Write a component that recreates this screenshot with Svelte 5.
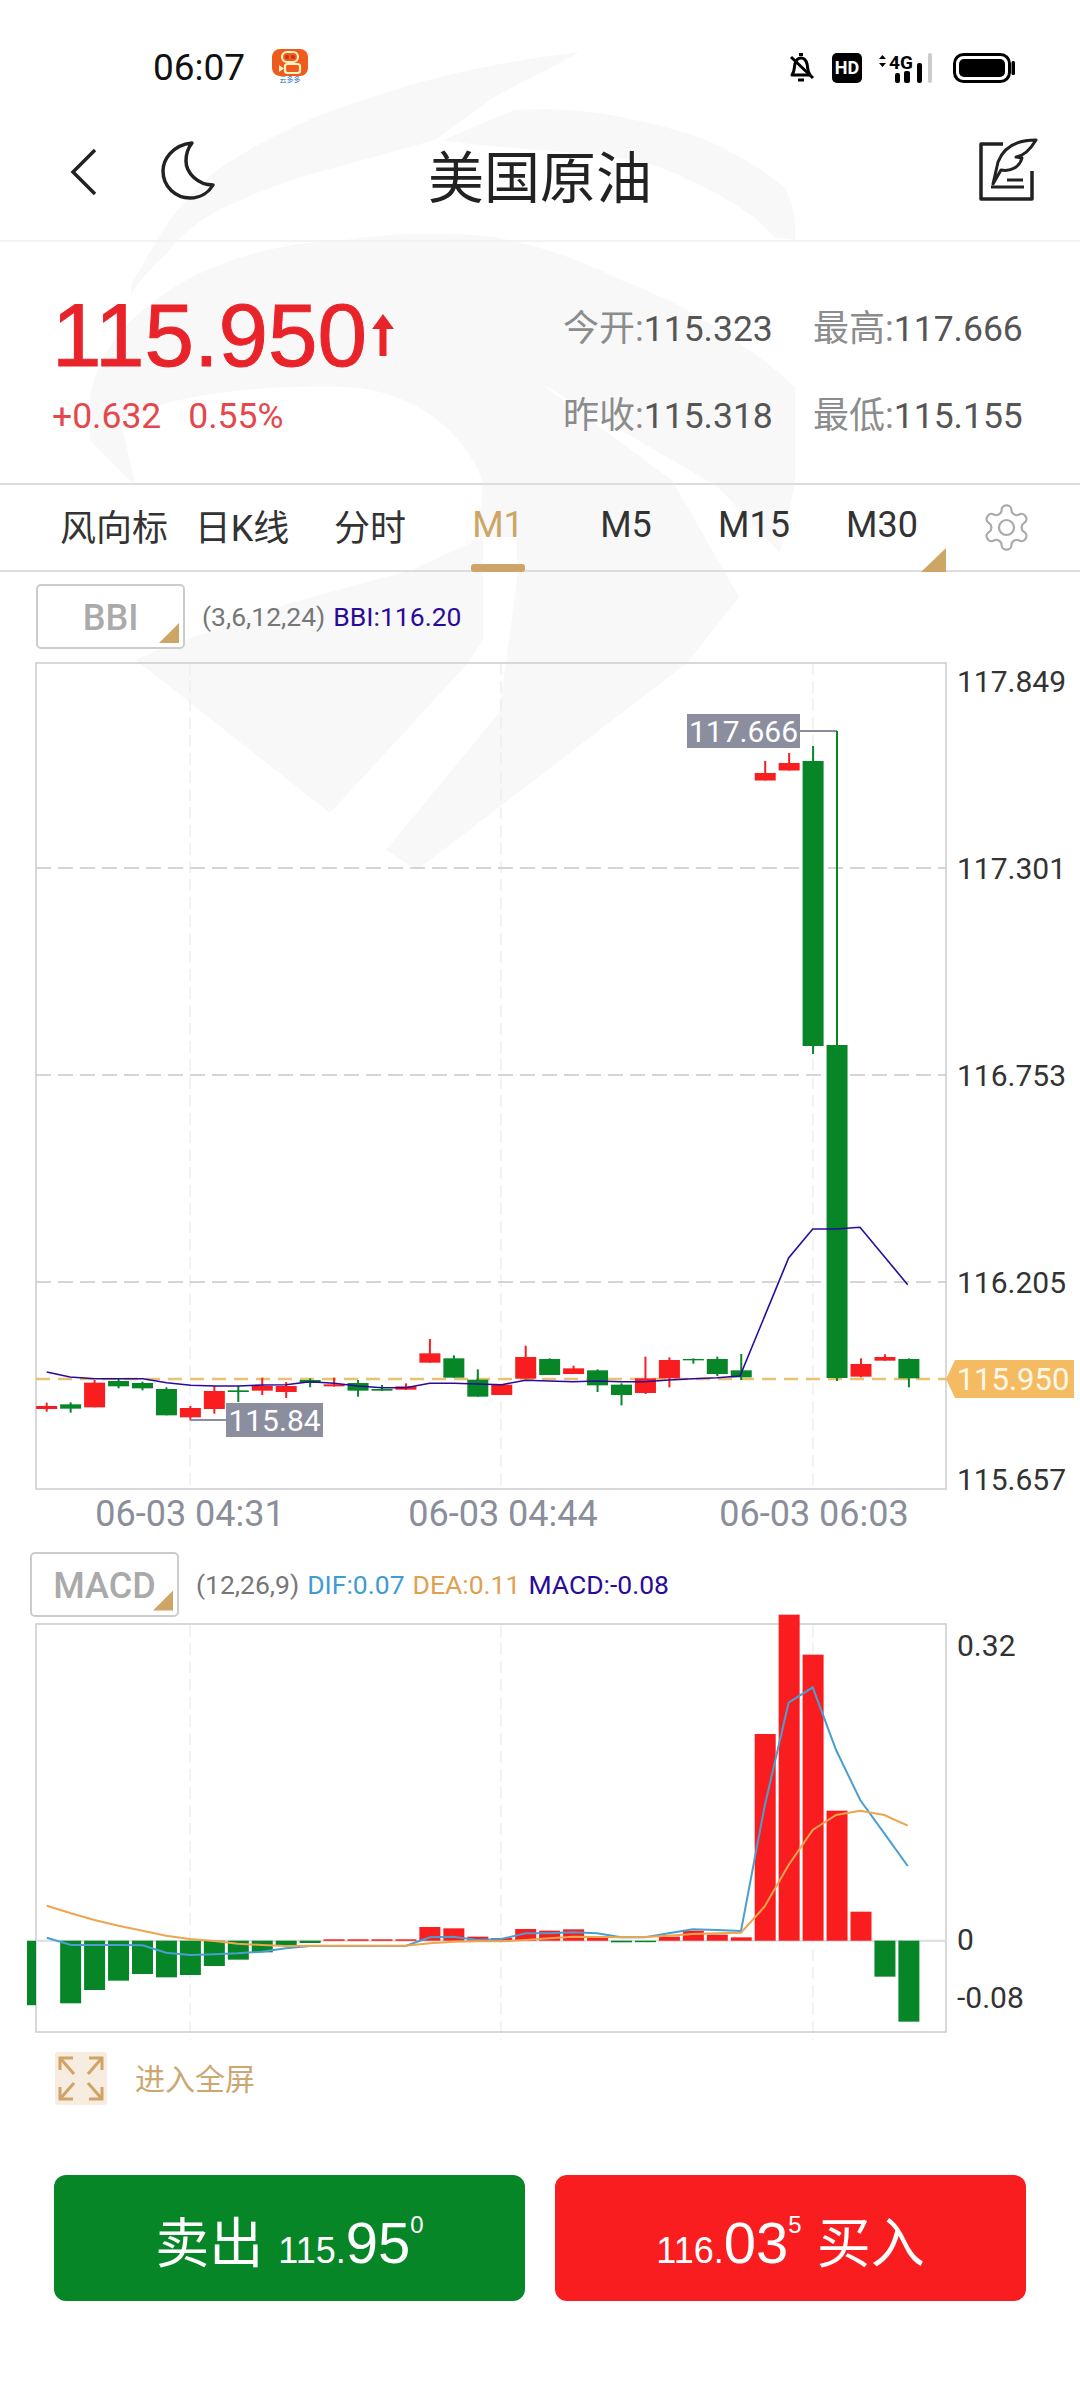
<script>
	const tabs = ['风向标', '日K线', '分时', 'M1', 'M5', 'M15', 'M30'];
	const stats = [
		['今开', '115.323'],
		['最高', '117.666'],
		['昨收', '115.318'],
		['最低', '115.155']
	];

	const UP = '#f91d1f';
	const DOWN = '#078628';
	const cx = (i) => 46.7 + 23.95 * i;
	const vy = (v) => 1300 + v / 3;

	// [type, wickTop, bodyTop, bodyBottom, wickBottom], read off a 3x crop starting at y=1300
	const low = [
		['u', 308, 318, 327, 335], ['d', 307, 313, 326, 338], ['u', 240, 248, 322, 322], ['d', 236, 243, 259, 265],
		['d', 245, 249, 265, 271], ['d', 262, 267, 346, 346], ['u', 318, 324, 352, 361], ['u', 258, 273, 327, 341],
		['d', 258, 271, 276, 306], ['u', 233, 258, 272, 285], ['u', 246, 258, 276, 294], ['d', 235, 240, 249, 262],
		['u', 233, 253, 259, 260], ['d', 240, 249, 272, 290], ['d', 255, 267, 272, 273], ['u', 250, 259, 269, 270],
		['u', 117, 160, 188, 188], ['d', 166, 175, 233, 233], ['d', 208, 239, 290, 290], ['u', 254, 254, 285, 285],
		['u', 137, 171, 236, 236], ['d', 175, 177, 225, 225], ['u', 197, 205, 222, 222], ['d', 208, 211, 256, 276],
		['d', 250, 254, 285, 316], ['u', 170, 235, 279, 282], ['u', 172, 180, 235, 262], ['d', 175, 177, 181, 191],
		['d', 170, 177, 222, 228], ['d', 162, 211, 232, 240]
	];
	const candles = [
		...low.map(([t, a, b, c, d], i) => ({ i, t, wt: vy(a), bt: vy(b), bb: vy(c), wb: vy(d) })),
		{ i: 30, t: 'u', wt: 761, bt: 773, bb: 780.5, wb: 780.5 },
		{ i: 31, t: 'u', wt: 753, bt: 763, bb: 770.5, wb: 770.5 },
		{ i: 32, t: 'd', wt: 746, bt: 761, bb: 1046, wb: 1054 },
		{ i: 33, t: 'd', wt: 1045, bt: 1045, bb: 1378, wb: 1381 },
		{ i: 34, t: 'u', wt: vy(175), bt: vy(192), bb: vy(230), wb: vy(232) },
		{ i: 35, t: 'u', wt: vy(163), bt: vy(171), bb: vy(182), wb: vy(182) },
		{ i: 36, t: 'd', wt: vy(175), bt: vy(177), bb: vy(235), wb: vy(262) }
	];

	const bbi = [
		[46.7, 1372], [70, 1377], [94.7, 1378.7], [143, 1378.7], [166.7, 1382.7], [190.7, 1385.3], [214.7, 1386], [238.3, 1386],
		[262.3, 1385], [286, 1384.7], [310, 1381.7], [334, 1383.3], [358, 1386], [382, 1387.7], [405.7, 1387.7], [429.7, 1383.3],
		[453.7, 1383.3], [477.7, 1384], [501.7, 1384.7], [525.5, 1380.3], [549, 1381], [573, 1381.7], [597, 1381], [621, 1381.7],
		[645, 1381.7], [669, 1380], [693, 1378.7], [717, 1377.7], [740, 1376], [788.6, 1258], [812.7, 1229], [836, 1229],
		[860, 1227.3], [907.7, 1284.7]
	];

	const ZERO = 1940.7;
	const my = (v) => 1540 + v / 3;
	// histogram ends per candle index, null where the bar is missing
	const hist = [
		null, 1390, 1350, 1322, 1302, 1312, 1305, 1278, 1259, 1237, 1217, 1209, 1198, 1198, 1198, 1198,
		1161, 1165, 1190, 1194, 1167, 1172, 1168, 1190, 1207, 1204, 1190, 1172, 1184, 1192, 582, 224, 344, 812, 1115, 1310, 1445
	];
	const bars = hist
		.map((v, i) => ({ v, i }))
		.filter((b) => b.v !== null)
		.map(({ v, i }) => {
			const e = my(v);
			return { i, up: e < ZERO, y: Math.min(e, ZERO), h: Math.max(Math.abs(e - ZERO), 1.5) };
		});
	const zx = [68, 103, 137, 172, 207, 241, 276, 311, 345, 380, 415, 450, 485, 520, 554, 589, 624, 658, 693, 728, 763, 798, 832, 867, 902, 937, 971, 1006, 1041, 1076, 1110, 1145, 1180, 1214, 1249, 1284, 1318];
	const difv = [1193, 1215, 1215, 1215, 1216, 1238, 1245, 1243, 1240, 1235, 1225, 1218, 1218, 1218, 1218, 1218, 1192, 1190, 1200, 1197, 1180, 1180, 1177, 1180, 1192, 1192, 1180, 1168, 1170, 1173, 800, 488, 442, 630, 780, 880, 978];
	const deav = [1097, 1120, 1140, 1157, 1172, 1187, 1197, 1203, 1211, 1215, 1218, 1217, 1217, 1217, 1217, 1217, 1210, 1205, 1204, 1204, 1200, 1195, 1190, 1191, 1192, 1191, 1187, 1182, 1180, 1178, 1100, 975, 870, 825, 812, 825, 857];
	const line = (vals) => vals.map((v, i) => `${(zx[i] / 1.452).toFixed(1)},${my(v).toFixed(1)}`).join(' ');
	const bbiPts = bbi.map((p) => p.join(',')).join(' ');
</script>

<div class="page">
	<svg class="watermark" viewBox="0 0 1080 900" width="1080" height="900">
		<path d="M580 52 C500 62 460 72 417 83 C380 95 350 103 315 117 C275 135 240 153 213 173 C185 200 170 218 157 240 L131 285 L131 295 C145 272 155 265 167 253 C180 235 195 225 213 213 C250 195 280 183 315 173 L435 140 L494 97Z" />
		<path d="M514 110 C550 108 590 110 621 117 C660 125 690 133 713 143 C745 158 765 172 784 187 C795 205 796 222 795 240 L774 237 C760 220 745 210 723 197 C700 185 675 172 647 163 C590 150 500 150 443 140Z" />
		<path d="M90 400 C100 320 200 245 346 240 C395 232 450 232 494 237 C540 245 585 262 621 280 C660 295 695 312 723 333 C750 350 775 368 795 387 L795 483 L780 553 L718 487 L540 383 L672 480 L739 597 L687 663 L417 870 L386 850 L499 713 L517 580 L517 537 L478 537 L483 483 C470 440 420 390 346 387 C280 385 213 390 160 405 L121 423 L136 487 L90 440Z" />
		<path d="M136 660 C180 640 240 622 290 603 L412 570 L483 537 V640 L468 663 L330 813Z" />
	</svg>

	<div class="content">
		<header class="status">
			<span class="time">06:07</span>
			<svg class="app-icon" viewBox="0 0 36 34" width="36" height="34">
				<rect x="0" y="0" width="36" height="27" rx="8" fill="#ee5b1c" />
				<rect x="10" y="3" width="16" height="10" rx="5" fill="none" stroke="#fff3c4" stroke-width="2.2" />
				<circle cx="15" cy="8" r="2" fill="#c8321c" />
				<circle cx="21" cy="8" r="2" fill="#c8321c" />
				<rect x="13" y="15" width="15" height="9" rx="2.5" fill="none" stroke="#fff3c4" stroke-width="2.2" />
				<path d="M7 16 L12 19.5 L7 23Z" fill="#fff3c4" />
				<text x="18" y="33" text-anchor="middle" class="app-name">云多多</text>
			</svg>
			<div class="status-right">
				<svg viewBox="0 0 26 30" width="26" height="30">
					<path d="M4 22 C7 18 6 14 7 11 C8 7 10 5 13 5 C16 5 18 7 19 11 C20 14 19 18 22 22Z" fill="none" stroke="#000" stroke-width="3" stroke-linejoin="round" />
					<path d="M3 4 L25 25" stroke="#000" stroke-width="3" />
					<path d="M11 1.5 H15 M10 27 H16" stroke="#000" stroke-width="3" />
				</svg>
				<span class="hd">HD</span>
				<svg viewBox="0 0 56 30" width="56" height="30">
					<path d="M1 6 L4.5 2 L8 6Z M1 10 L4.5 14 L8 10Z" fill="#000" />
					<text x="11" y="16" class="net">4G</text>
					<rect x="17" y="20" width="5" height="10" rx="2" fill="#000" />
					<rect x="26" y="18" width="6" height="12" rx="2" fill="#000" />
					<rect x="39" y="10" width="5" height="20" rx="2" fill="#000" />
					<rect x="50" y="0" width="4" height="30" rx="2" fill="#ccc" />
				</svg>
				<svg class="battery" viewBox="0 0 62 30" width="62" height="30">
					<rect x="1.5" y="1.5" width="55" height="27" rx="9" fill="none" stroke="#000" stroke-width="3" />
					<rect x="6" y="6" width="46" height="18" rx="5" fill="#000" />
					<rect x="58.5" y="8" width="3.5" height="14" rx="1.5" fill="#000" />
				</svg>
			</div>
		</header>

		<nav class="nav">
			<svg class="nav-left" viewBox="60 140 170 70" width="170" height="70">
				<path d="M95 155 L73 177 L95 199" fill="none" stroke="#222" stroke-width="3.5" />
				<path d="M192 148 C172 150 163 165 163 176 C163 192 176 203 190 203 C201 203 209 197 213 190 C198 190 186 178 186 166 C186 159 188 153 192 148Z" fill="none" stroke="#222" stroke-width="3.5" stroke-linejoin="round" />
			</svg>
			<h1>美国原油</h1>
			<svg class="nav-right" viewBox="976 140 64 72" width="64" height="72">
				<path d="M1003 150 H981 V205 H1032 V177" fill="none" stroke="#222" stroke-width="3.5" stroke-linejoin="round" />
				<path d="M1036 146 C1018 146 1004 152 998 168 L993 190 L1001 176 C1012 178 1020 172 1022 164 L1016 163 C1024 162 1030 156 1036 146Z" fill="none" stroke="#222" stroke-width="3" stroke-linejoin="round" />
				<path d="M1007 186 H1023 M991 193 H1024" stroke="#222" stroke-width="3" />
			</svg>
		</nav>

		<section class="quote">
			<div class="quote-main">
				<div class="price">
					<span>115.950</span>
					<svg viewBox="0 0 22 42" width="22" height="42">
						<path d="M11 0 L22 15 H14.5 V42 H7.5 V15 H0Z" fill="#e8242a" />
					</svg>
				</div>
				<div class="change"><span>+0.632</span><span>0.55%</span></div>
			</div>
			<div class="stats">
				{#each stats as [label, value]}
					<div class="stat"><span class="stat-label">{label}:</span>{value}</div>
				{/each}
			</div>
		</section>

		<div class="tabs">
			{#each tabs as t, i}
				<div class="tab label" class:active={t === 'M1'} class:more={i === tabs.length - 1}>{t}</div>
			{/each}
			<div class="tab gear">
				<svg viewBox="0 0 24 24" width="53" height="53" fill="none" stroke="#aaa" stroke-width="1" stroke-linejoin="round">
					<path d="M12.22 2h-.44a2 2 0 0 0-2 2v.18a2 2 0 0 1-1 1.73l-.43.25a2 2 0 0 1-2 0l-.15-.08a2 2 0 0 0-2.73.73l-.22.38a2 2 0 0 0 .73 2.73l.15.1a2 2 0 0 1 1 1.72v.51a2 2 0 0 1-1 1.74l-.15.09a2 2 0 0 0-.73 2.73l.22.38a2 2 0 0 0 2.73.73l.15-.08a2 2 0 0 1 2 0l.43.25a2 2 0 0 1 1 1.73V20a2 2 0 0 0 2 2h.44a2 2 0 0 0 2-2v-.18a2 2 0 0 1 1-1.73l.43-.25a2 2 0 0 1 2 0l.15.08a2 2 0 0 0 2.73-.73l.22-.39a2 2 0 0 0-.73-2.73l-.15-.08a2 2 0 0 1-1-1.74v-.5a2 2 0 0 1 1-1.74l.15-.09a2 2 0 0 0 .73-2.73l-.22-.38a2 2 0 0 0-2.73-.73l-.15.08a2 2 0 0 1-2 0l-.43-.25a2 2 0 0 1-1-1.73V4a2 2 0 0 0-2-2z" />
					<circle cx="12" cy="12" r="3.4" />
				</svg>
			</div>
		</div>

		<div class="ind-row first">
			<div class="ind-box">BBI</div>
			<span class="params">(3,6,12,24)</span>
			<span class="purple">BBI:116.20</span>
		</div>

		<svg class="chart" viewBox="0 662 1080 888" width="1080" height="888">
			{#each [190, 501, 813] as x}
				<line x1={x} x2={x} y1="663" y2="1488" class="vgrid" />
			{/each}
			{#each [868, 1075, 1282] as y}
				<line x1="36" x2="946" y1={y} y2={y} class="hgrid" />
			{/each}
			<rect x="36" y="663" width="910" height="826" class="frame" />
			<line x1="36" x2="946" y1="1379" y2="1379" class="last-line" />

			{#each candles as c}
				<g fill={c.t === 'u' ? UP : DOWN}>
					<rect x={cx(c.i) - 1} y={c.wt} width="2" height={c.wb - c.wt} />
					<rect x={cx(c.i) - 10.5} y={c.bt} width="21" height={c.bb - c.bt} />
				</g>
			{/each}

			<polyline points={bbiPts} class="bbi" />

			<path d="M800 731 H837" class="conn" />
			<path d="M837 731 V1045" class="conn-green" />
			<rect x="687" y="714" width="113" height="34" fill="#8a8e9e" />
			<text x="743.5" y="742" text-anchor="middle" class="tag">117.666</text>

			<path d="M190 1420 H226" class="conn" />
			<rect x="226" y="1403" width="97" height="34" fill="#8a8e9e" />
			<text x="274.5" y="1431" text-anchor="middle" class="tag">115.84</text>

			<path d="M946 1379 L955 1360 H1074 V1398 H955Z" fill="#f5bb63" />
			<text x="1013" y="1390" text-anchor="middle" class="tag big">115.950</text>

			{#each [['117.849', 681], ['117.301', 868], ['116.753', 1075], ['116.205', 1282], ['115.657', 1479]] as [t, y]}
				<text x="957" y={y + 11} class="axis">{t}</text>
			{/each}
			{#each [['06-03 04:31', 190], ['06-03 04:44', 503], ['06-03 06:03', 814]] as [t, x]}
				<text x={x} y="1526" text-anchor="middle" class="date">{t}</text>
			{/each}
		</svg>

		<div class="ind-row second">
			<div class="ind-box">MACD</div>
			<span class="params">(12,26,9)</span>
			<span class="blue">DIF:0.07</span>
			<span class="orange">DEA:0.11</span>
			<span class="purple">MACD:-0.08</span>
		</div>

		<svg class="chart" viewBox="0 1624 1080 416" width="1080" height="416">
			{#each [190, 501, 813] as x}
				<line x1={x} x2={x} y1="1625" y2="2040" class="vgrid" />
			{/each}
			<rect x="36" y="1624" width="910" height="408" class="frame" />
			<line x1="36" x2="946" y1={ZERO} y2={ZERO} class="zero" />
			<rect x="27" y={ZERO} width="9" height="64.5" fill={DOWN} />
			{#each bars as b}
				<rect x={cx(b.i) - 10.5} y={b.y} width="21" height={b.h} fill={b.up ? UP : DOWN} />
			{/each}
			<polyline points={line(difv)} class="dif" />
			<polyline points={line(deav)} class="dea" />
			<text x="957" y="1656" class="axis">0.32</text>
			<text x="957" y="1950" class="axis">0</text>
			<text x="957" y="2008" class="axis">-0.08</text>
		</svg>

		<div class="fullscreen">
			<svg viewBox="0 0 52 53" width="52" height="53">
				<rect width="52" height="53" rx="3" fill="#f7ece0" />
				<path d="M5 18 V6 H18 M5 6 L19 22 M47 18 V6 H34 M47 6 L33 22 M5 35 V47 H18 M5 47 L19 31 M47 35 V47 H34 M47 47 L33 31" fill="none" stroke="#d0a468" stroke-width="3" />
			</svg>
			<span>进入全屏</span>
		</div>

		<div class="trade">
			<button class="sell">
				<span class="cn">卖出</span>
				<span class="px"><small>115.</small>95<sup>0</sup></span>
			</button>
			<button class="buy">
				<span class="px"><small>116.</small>03<sup>5</sup></span>
				<span class="cn">买入</span>
			</button>
		</div>
	</div>
</div>

<style>
	:global(body) {
		margin: 0;
		background: #fff;
	}
	.page {
		position: relative;
		width: 1080px;
		height: 2400px;
		overflow: hidden;
		background: #fff;
		font-family: Roboto, "Noto Sans CJK SC", sans-serif;
	}
	.watermark {
		position: absolute;
		left: 0;
		top: 0;
		fill: #f8f8f8;
	}
	.content {
		position: relative;
	}
	svg {
		display: block;
	}

	.status {
		display: flex;
		align-items: center;
		height: 100px;
		padding: 34px 65px 0 153px;
		box-sizing: border-box;
	}
	.time {
		font-size: 37px;
		color: #111;
	}
	.app-icon {
		margin-left: 27px;
		margin-top: -2px;
		overflow: visible;
	}
	.app-name {
		font-size: 7px;
		fill: #2a6fb5;
		font-family: "Noto Sans CJK SC", sans-serif;
	}
	.status-right {
		display: flex;
		align-items: center;
		margin-left: auto;
		margin-top: 2px;
	}
	.status-right svg {
		overflow: visible;
	}
	.hd {
		width: 30px;
		height: 30px;
		margin-left: 18px;
		border-radius: 5px;
		background: #000;
		color: #fff;
		font-size: 18px;
		font-weight: 700;
		line-height: 30px;
		text-align: center;
	}
	.status-right .hd + svg {
		margin-left: 16px;
	}
	.net {
		font-size: 19px;
		font-weight: 700;
		fill: #000;
	}
	.battery {
		margin-left: 19px;
	}

	.nav {
		display: grid;
		grid-template-columns: 1fr auto 1fr;
		align-items: center;
		height: 142px;
		box-sizing: border-box;
		border-bottom: 2px solid #f3f3f3;
		padding: 0 40px;
	}
	.nav-left {
		margin-left: 20px;
	}
	.nav-right {
		justify-self: end;
	}
	.nav h1 {
		margin: 0;
		padding-top: 6px;
		font-size: 56px;
		font-weight: 400;
		color: #222;
		font-family: "Noto Sans CJK SC", sans-serif;
	}

	.quote {
		display: flex;
		justify-content: space-between;
		height: 243px;
		box-sizing: border-box;
		border-bottom: 2px solid #ddd;
	}
	.quote-main {
		padding: 51px 0 0 52px;
	}
	.price {
		display: flex;
		align-items: center;
		gap: 5px;
		font-family: "Liberation Sans", sans-serif;
		font-size: 89px;
		line-height: 84px;
		color: #e8242a;
		-webkit-text-stroke: 1px #e8242a;
	}
	.change {
		display: flex;
		gap: 27px;
		margin-top: 19px;
		font-size: 35.5px;
		line-height: 40px;
		color: #e5484c;
	}
	.stats {
		display: grid;
		grid-template-columns: 250px 267px;
		grid-auto-rows: 40px;
		row-gap: 47px;
		padding-top: 67px;
		font-size: 35.5px;
		line-height: 40px;
		color: #555;
	}
	.stat-label {
		color: #8c8c8c;
		font-size: 36px;
	}

	.tabs {
		display: grid;
		grid-template-columns: repeat(7, 128px) 120px;
		height: 87px;
		box-sizing: border-box;
		padding-left: 50px;
		border-bottom: 2px solid #ddd;
	}
	.tab {
		position: relative;
		display: flex;
		align-items: center;
		justify-content: center;
		font-size: 36px;
		color: #333;
	}
	.tab.label {
		padding-bottom: 5px;
	}
	.tab.active {
		color: #cda565;
	}
	.tab.active::after {
		content: "";
		position: absolute;
		left: 37px;
		right: 37px;
		bottom: -2px;
		height: 8px;
		border-radius: 3px;
		background: #d0a468;
	}
	.tab.more::after {
		content: "";
		position: absolute;
		right: 0;
		bottom: -2px;
		width: 25px;
		height: 24px;
		background: #cda565;
		clip-path: polygon(100% 0, 100% 100%, 0 100%);
	}

	.ind-row {
		display: flex;
		align-items: center;
		gap: 8px;
		box-sizing: border-box;
		font-size: 26.5px;
	}
	.ind-row.first {
		height: 90px;
		padding: 0 0 1px 36px;
	}
	.ind-row.second {
		height: 74px;
		padding: 2px 0 8px 30px;
	}
	.ind-box {
		position: relative;
		box-sizing: border-box;
		width: 149px;
		height: 65px;
		margin-right: 9px;
		border: 2px solid #ccc;
		border-radius: 5px;
		background: rgba(255, 255, 255, 0.6);
		color: #aaa;
		font-size: 36px;
		font-weight: 500;
		line-height: 65px;
		text-align: center;
	}
	.ind-box::after {
		content: "";
		position: absolute;
		right: 4px;
		bottom: 4px;
		width: 20px;
		height: 20px;
		background: #cda565;
		clip-path: polygon(100% 0, 100% 100%, 0 100%);
	}
	.params {
		color: #777;
	}
	.purple {
		color: #2a0a9a;
	}
	.blue {
		color: #3f9bd0;
	}
	.orange {
		color: #e0a050;
	}

	.chart {
		overflow: visible;
	}
	.vgrid {
		stroke: #eee;
		stroke-width: 1.5;
		stroke-dasharray: 12 6;
	}
	.hgrid {
		stroke: #c8c8c8;
		stroke-width: 1.5;
		stroke-dasharray: 15 7;
		fill: none;
	}
	.frame {
		fill: none;
		stroke: #ccc;
		stroke-width: 1.5;
	}
	.zero {
		stroke: #ddd;
		stroke-width: 2;
	}
	.last-line {
		stroke: #e8c36f;
		stroke-width: 2.5;
		stroke-dasharray: 14 8;
	}
	.bbi {
		fill: none;
		stroke: #2a0a9a;
		stroke-width: 1.6;
	}
	.conn {
		fill: none;
		stroke: #8a8e9e;
		stroke-width: 2;
	}
	.conn-green {
		fill: none;
		stroke: #078628;
		stroke-width: 2;
	}
	.tag {
		font-size: 30px;
		fill: #fff;
	}
	.tag.big {
		font-size: 31px;
		fill: #fff8e6;
	}
	.axis {
		font-size: 30px;
		fill: #333;
	}
	.date {
		font-size: 36px;
		fill: #8a8e9a;
	}
	.dif {
		fill: none;
		stroke: #4a9fd0;
		stroke-width: 2;
	}
	.dea {
		fill: none;
		stroke: #eda54e;
		stroke-width: 2;
	}

	.fullscreen {
		display: flex;
		align-items: center;
		gap: 28px;
		height: 53px;
		margin-top: 12px;
		padding: 0 0 0 55px;
		font-family: "Noto Sans CJK SC", sans-serif;
		font-size: 30px;
		color: #cba873;
	}
	.fullscreen span {
		padding-bottom: 3px;
	}

	.trade {
		display: flex;
		gap: 30px;
		margin-top: 70px;
		padding: 0 54px;
	}
	.trade button {
		display: flex;
		flex: 1;
		align-items: baseline;
		justify-content: center;
		gap: 15px;
		height: 126px;
		padding: 25px 0 0;
		box-sizing: border-box;
		border: 0;
		border-radius: 12px;
		color: #fff;
		font-family: "Liberation Sans", sans-serif;
	}
	.sell {
		background: #078628;
	}
	.buy {
		background: #f91d1f;
	}
	.cn {
		font-family: "Noto Sans CJK SC", sans-serif;
		font-size: 54px;
	}
	.px {
		font-size: 58px;
		white-space: nowrap;
	}
	.px small {
		font-size: 36px;
	}
	.px sup {
		font-size: 24px;
		line-height: 0;
		vertical-align: 30px;
	}
</style>
